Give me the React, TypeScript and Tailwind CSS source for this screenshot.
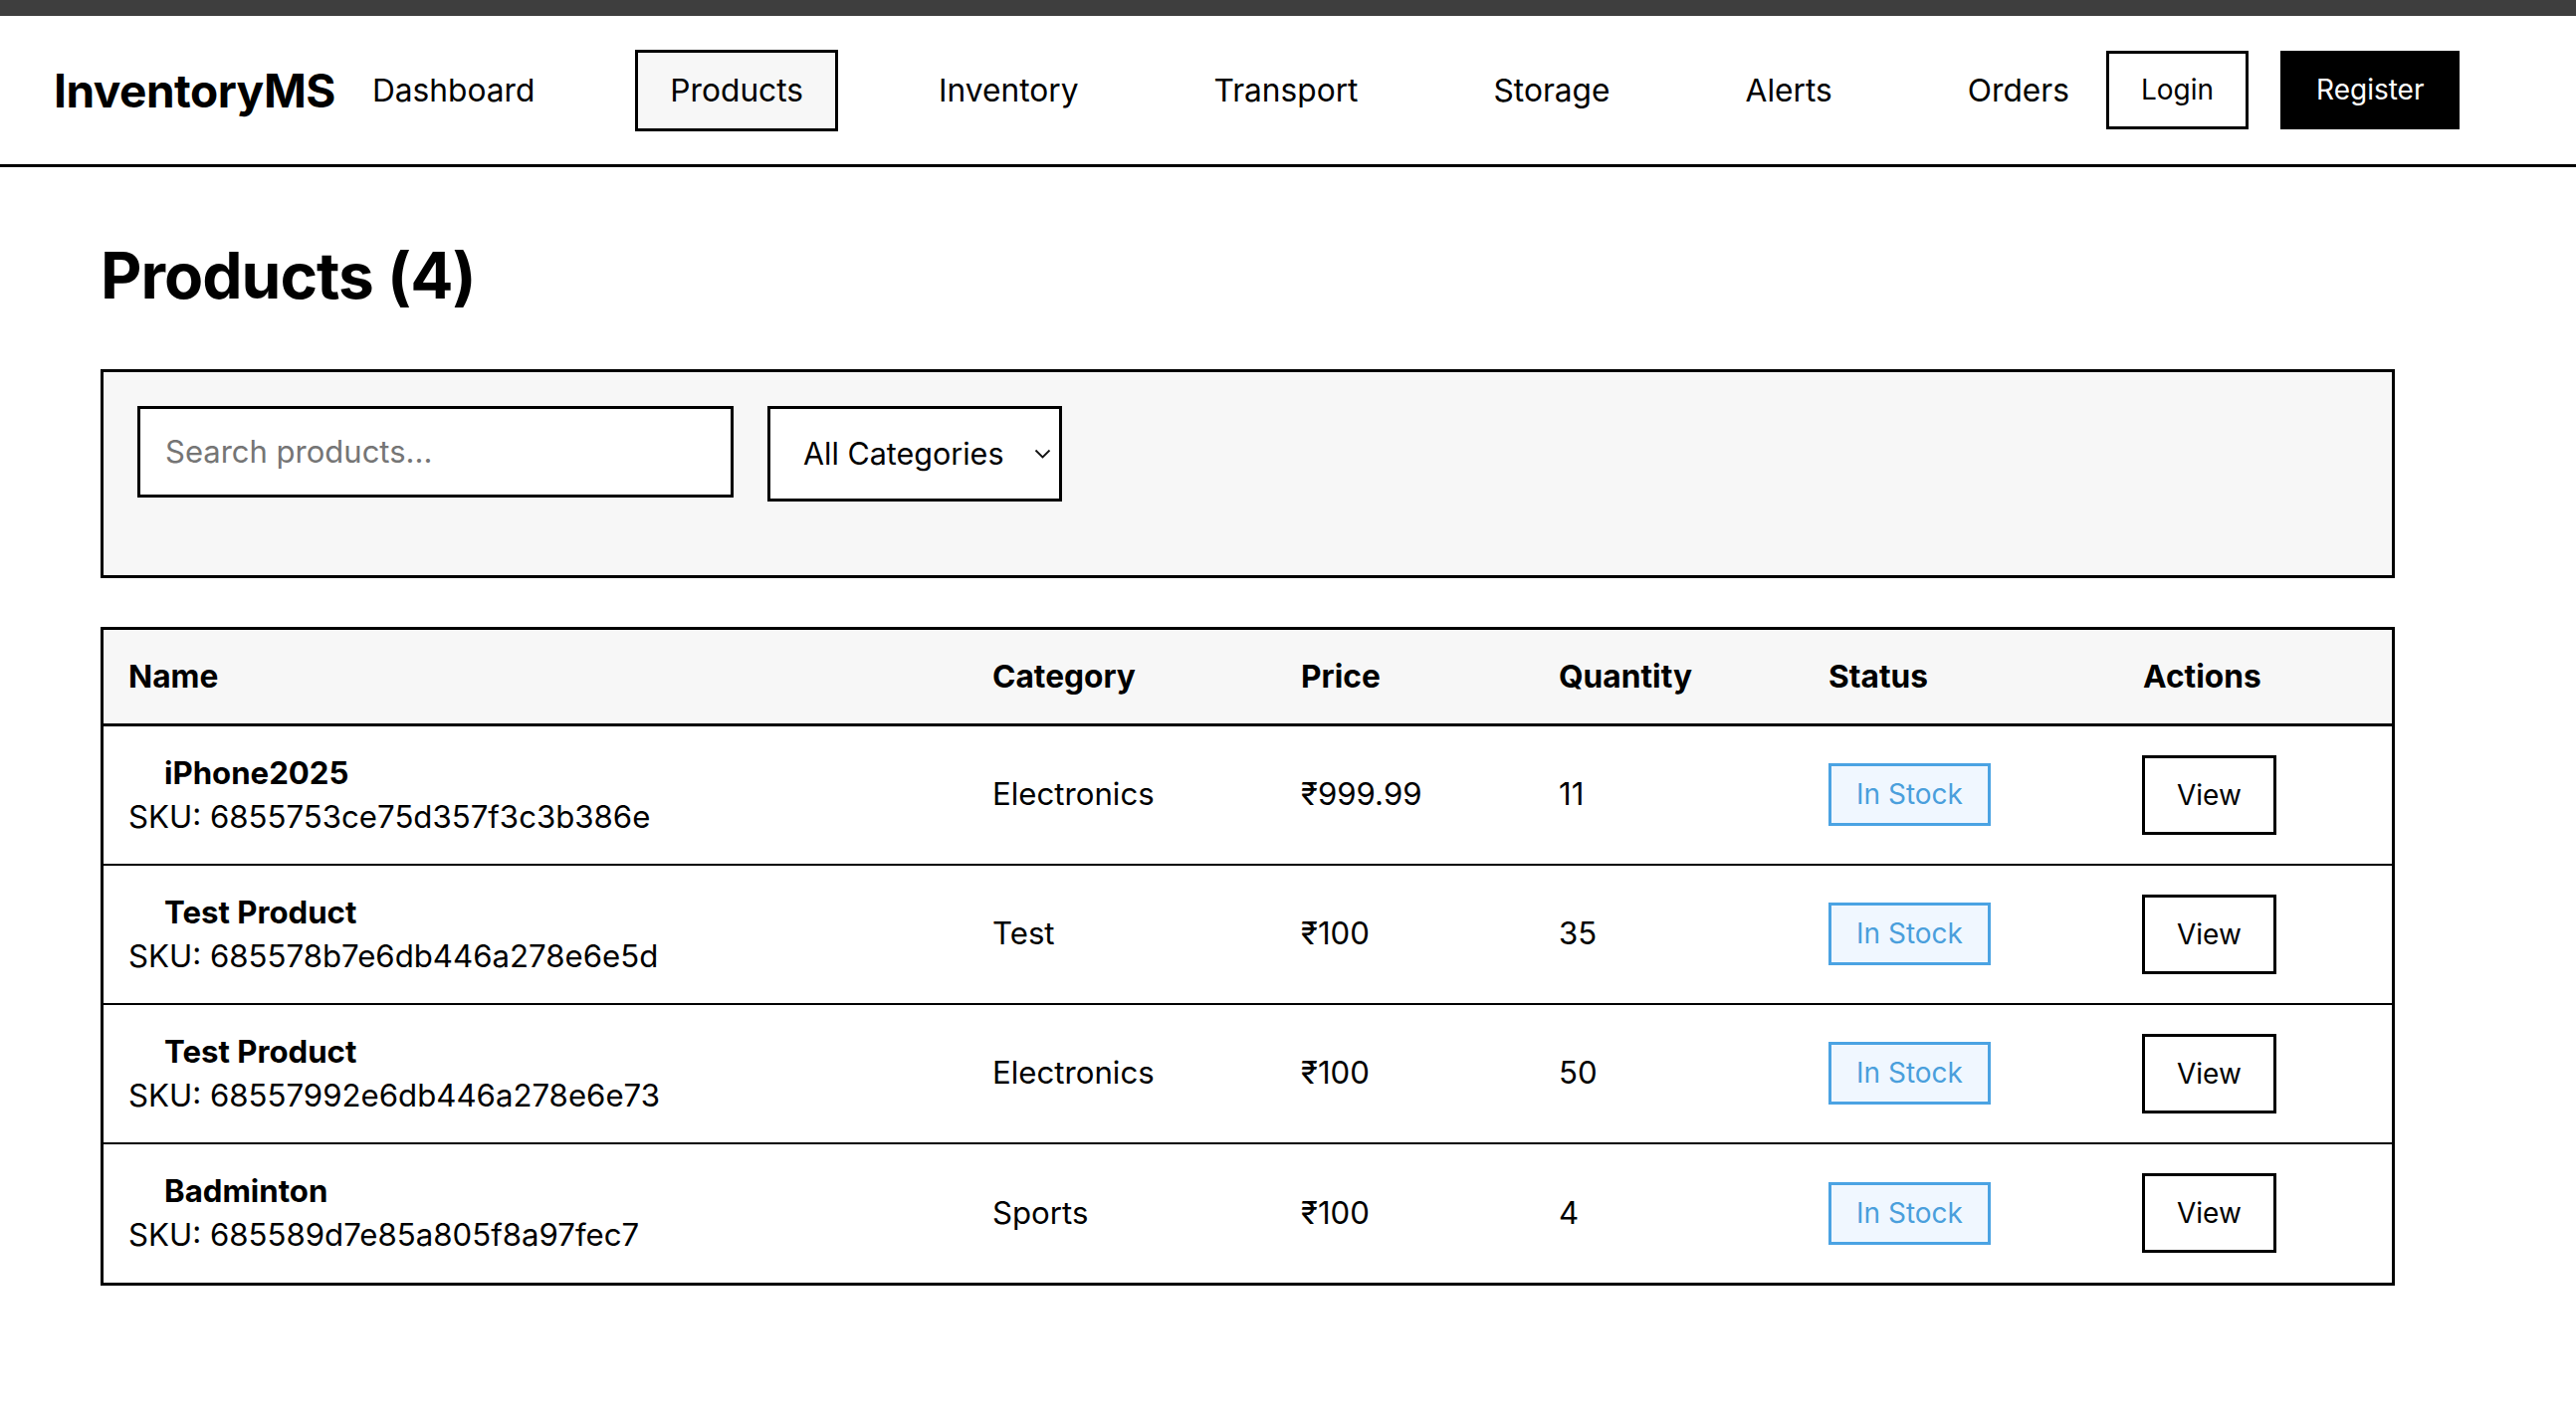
import React from "react";

const products = [
  { name: "iPhone2025", sku: "6855753ce75d357f3c3b386e", category: "Electronics", price: "₹999.99", qty: "11" },
  { name: "Test Product", sku: "685578b7e6db446a278e6e5d", category: "Test", price: "₹100", qty: "35" },
  { name: "Test Product", sku: "68557992e6db446a278e6e73", category: "Electronics", price: "₹100", qty: "50" },
  { name: "Badminton", sku: "685589d7e85a805f8a97fec7", category: "Sports", price: "₹100", qty: "4" },
];

const navLinks = ["Dashboard", "Products", "Inventory", "Transport", "Storage", "Alerts", "Orders"];

const cols = "grid grid-cols-[868px_310px_259px_271px_316px_1fr]";

export default function App() {
  return (
    <div className="min-h-[1422px] bg-white text-black font-['Inter','Liberation_Sans',sans-serif]">
      <div className="h-[16px] bg-[#3e3e3e]" />
      <nav className="flex h-[152px] items-center border-b-[3px] border-black pl-[54px]">
        <div className="text-[46px] font-bold leading-none tracking-[-0.5px]">InventoryMS</div>
        <ul className="ml-[2px] flex items-center gap-[66px]">
          {navLinks.map((l) => (
            <li
              key={l}
              className={
                l === "Products"
                  ? "border-[3px] border-black bg-[#f7f7f7] px-[32px] py-[14px] text-[31.7px] leading-[48px]"
                  : "border-[3px] border-transparent px-[32px] py-[14px] text-[31.7px] leading-[48px]"
              }
            >
              {l}
            </li>
          ))}
        </ul>
        <button className="ml-[2px] border-[3px] border-black bg-white px-[32px] py-[15px] text-[28px] leading-[43px]">
          Login
        </button>
        <button className="ml-[32px] border-[3px] border-black bg-black px-[33px] py-[15px] text-[28px] leading-[43px] text-white">
          Register
        </button>
      </nav>

      <main className="px-[101px] pt-[71px]">
        <div className="w-[2305px]">
          <h1 className="text-[64px] font-bold leading-[1.2] tracking-[-1px]">Products (4)</h1>

          <div className="mt-[55px] border-[3px] border-black bg-[#f7f7f7] px-[34px] pt-[34px] pb-[74px]">
            <div className="flex items-start gap-[34px]">
              <div className="flex h-[92px] w-[599px] items-center border-[3px] border-black bg-white pl-[25px] text-[31px] text-[#757575]">
                Search products...
              </div>
              <div className="flex h-[96px] w-[296px] items-center justify-between border-[3px] border-black bg-white pl-[33px] pr-[8px] text-[30.5px]">
                <span>All Categories</span>
                <svg width="17" height="10" viewBox="0 0 17 10" fill="none">
                  <path d="M1.5 1.5 L8.5 8.5 L15.5 1.5" stroke="#111" strokeWidth="1.8" />
                </svg>
              </div>
            </div>
          </div>

          <div className="mt-[49px] border-[3px] border-black text-[31.2px]">
            <div className={`${cols} h-[97px] items-center border-b-[3px] border-black bg-[#f7f7f7] text-[31.7px] font-bold leading-[1.5]`}>
              {["Name", "Category", "Price", "Quantity", "Status", "Actions"].map((h) => (
                <div key={h} className="px-[25px]">
                  {h}
                </div>
              ))}
            </div>
            {products.map((p, i) => (
              <div
                key={p.sku}
                className={`${cols} items-center leading-[1.5] ${i < products.length - 1 ? "h-[140px] border-b-2 border-black" : "h-[139px]"}`}
              >
                <div className="px-[25px]">
                  <div className="ml-[36px] font-bold leading-[44px]">{p.name}</div>
                  <div className="leading-[44px]">SKU: {p.sku}</div>
                </div>
                <div className="px-[25px]">{p.category}</div>
                <div className="px-[25px]">{p.price}</div>
                <div className="px-[25px]">{p.qty}</div>
                <div className="px-[25px]">
                  <span className="inline-block border-[3px] border-[#4ba3e3] bg-[#f0f7ff] px-[25px] py-[7px] text-[28px] leading-[43px] text-[#4a9fdc]">
                    In Stock
                  </span>
                </div>
                <div className="flex px-[24px]">
                  <button className="border-[3px] border-black bg-white px-[32px] py-[16px] text-[28px] leading-[42px]">
                    View
                  </button>
                </div>
              </div>
            ))}
          </div>
        </div>
      </main>
    </div>
  );
}
